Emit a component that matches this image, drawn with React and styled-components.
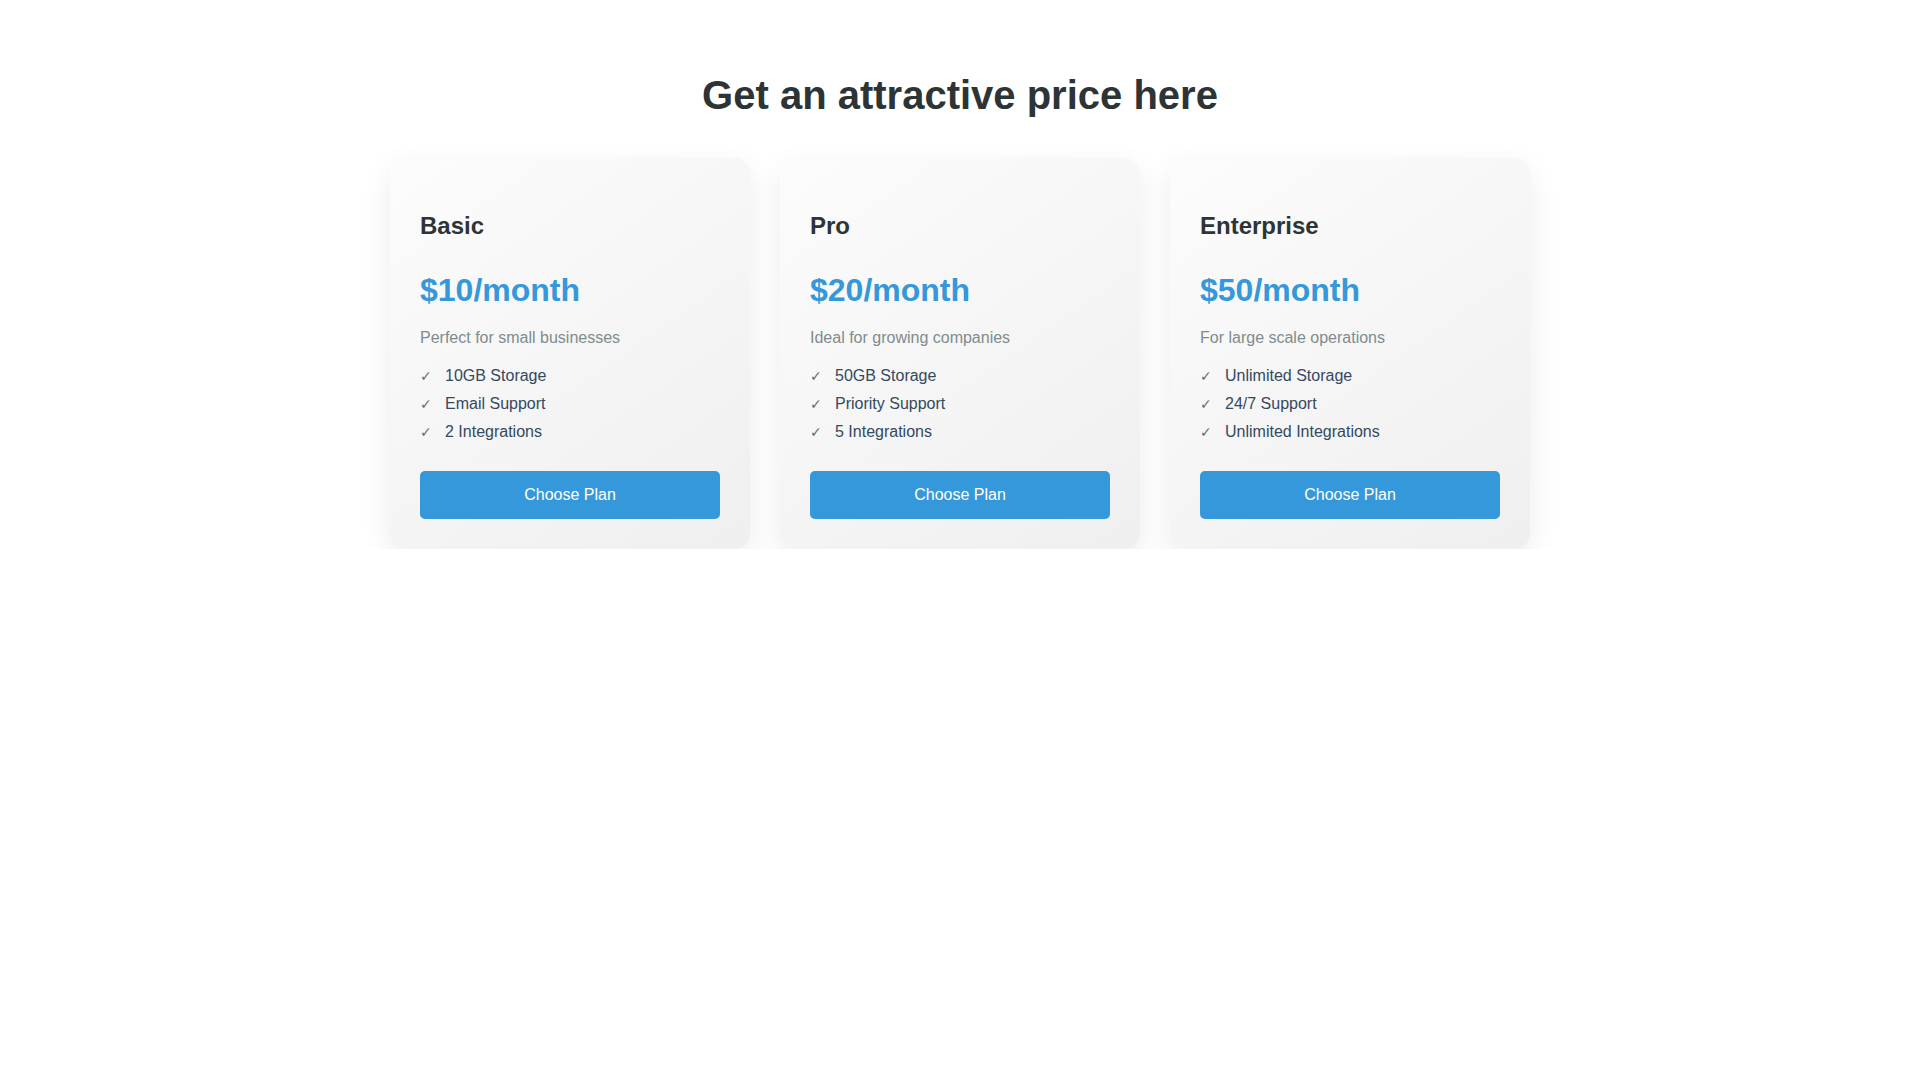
import React from "react";
import styled, { createGlobalStyle } from "styled-components";

const GlobalStyle = createGlobalStyle`
  html, body {
    margin: 0;
    padding: 0;
    background: #ffffff;
    font-family: "Liberation Sans", Arial, sans-serif;
  }
`;

const Page = styled.main`
  display: flex;
  flex-direction: column;
  align-items: center;
  padding-top: 72px;
`;

const Heading = styled.h1`
  margin: 0 0 40px;
  font-size: 40px;
  line-height: 46px;
  font-weight: 700;
  color: #2d3436;
`;

const CardRow = styled.div`
  display: flex;
  gap: 30px;
`;

const Card = styled.section`
  box-sizing: border-box;
  width: 360px;
  padding: 30px;
  border-radius: 15px;
  background: linear-gradient(145deg, #fcfcfc, #efefef);
  box-shadow: 0 10px 30px rgba(0, 0, 0, 0.08);
  display: flex;
  flex-direction: column;
`;

const PlanName = styled.h3`
  margin: 24px 0 0;
  font-size: 24px;
  line-height: 28px;
  font-weight: 700;
  color: #2d3436;
`;

const Price = styled.div`
  margin-top: 32px;
  font-size: 32px;
  line-height: 37px;
  font-weight: 700;
  color: #3498db;
`;

const Description = styled.p`
  margin: 20px 0 0;
  font-size: 16px;
  line-height: 18px;
  color: #7f8c8d;
`;

const Features = styled.ul`
  list-style: none;
  margin: 15px 0 0;
  padding: 0;
`;

const Feature = styled.li`
  display: block;
  height: 28px;
  font-size: 16px;
  line-height: 28px;
  color: #34495e;

  &::before {
    content: "✓";
    display: inline-block;
    width: 25px;
    font-family: "DejaVu Sans", sans-serif;
    font-size: 14px;
    color: #636e72;
  }
`;

const ChooseButton = styled.button`
  margin-top: 25px;
  width: 100%;
  height: 48px;
  padding: 0;
  border: none;
  border-radius: 5px;
  background: #3498db;
  color: #ffffff;
  font-family: "Liberation Sans", Arial, sans-serif;
  font-size: 16px;
  line-height: 18px;
  cursor: pointer;
`;

const plans = [
  {
    name: "Basic",
    price: "$10/month",
    desc: "Perfect for small businesses",
    features: ["10GB Storage", "Email Support", "2 Integrations"],
  },
  {
    name: "Pro",
    price: "$20/month",
    desc: "Ideal for growing companies",
    features: ["50GB Storage", "Priority Support", "5 Integrations"],
  },
  {
    name: "Enterprise",
    price: "$50/month",
    desc: "For large scale operations",
    features: ["Unlimited Storage", "24/7 Support", "Unlimited Integrations"],
  },
];

export default function App() {
  return (
    <>
      <GlobalStyle />
      <Page>
        <Heading>Get an attractive price here</Heading>
        <CardRow>
          {plans.map((p) => (
            <Card key={p.name}>
              <PlanName>{p.name}</PlanName>
              <Price>{p.price}</Price>
              <Description>{p.desc}</Description>
              <Features>
                {p.features.map((f) => (
                  <Feature key={f}>{f}</Feature>
                ))}
              </Features>
              <ChooseButton>Choose Plan</ChooseButton>
            </Card>
          ))}
        </CardRow>
      </Page>
    </>
  );
}
